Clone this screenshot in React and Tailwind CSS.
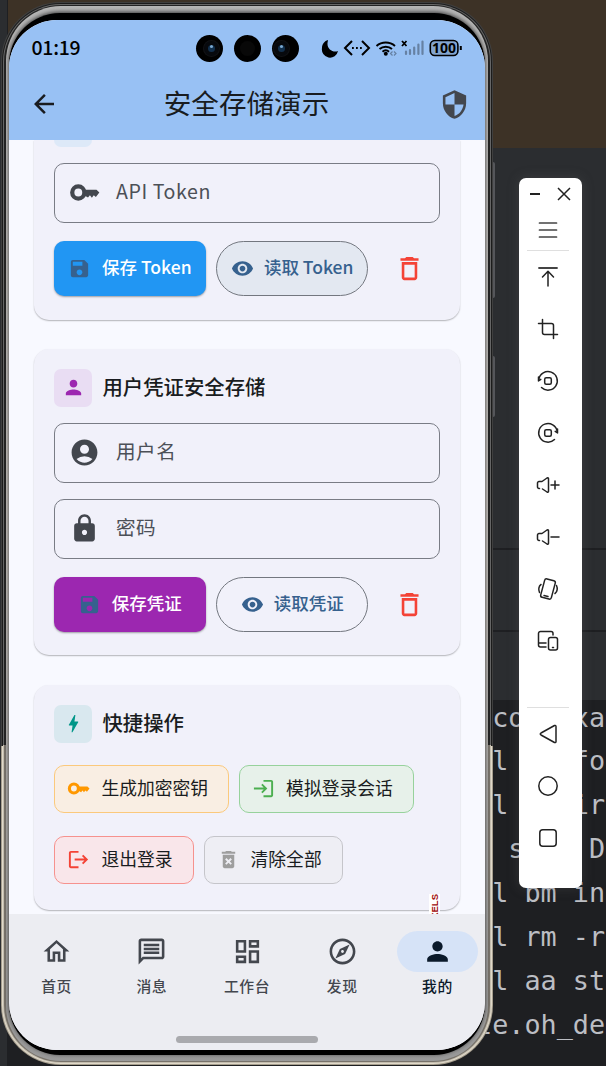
import React, { useState } from 'react';
import {
  MdArrowBack,
  MdSecurity,
  MdSave,
  MdVisibility,
  MdDeleteOutline,
  MdPerson,
  MdAccountCircle,
  MdLock,
  MdBolt,
  MdLogin,
  MdLogout,
  MdDeleteForever,
  MdOutlineHome,
  MdOutlineMessage,
  MdOutlineDashboard,
  MdOutlineExplore
} from 'react-icons/md';

const codeLines = [
  ' com.exam',
  ' l  info',
  ' l mkdir',
  '  send D',
  ' l bm ins',
  ' l rm -rf',
  ' l aa sta',
  'le.oh_dem'
];

const tabs = [
  { label: '首页', icon: MdOutlineHome },
  { label: '消息', icon: MdOutlineMessage },
  { label: '工作台', icon: MdOutlineDashboard },
  { label: '发现', icon: MdOutlineExplore },
  { label: '我的', icon: MdPerson }
];

const KeyIcon = ({ className }) => (
  <svg viewBox="0 0 24 24" fill="none" className={className}>
    <circle cx="7.200" cy="12" r="4.700" stroke="currentColor" strokeWidth="3.300" />
    <path d="M12 9.900h9.300l2.200 2.100-2.700 3.400-1.600-1.300-1.500 1.900-1.500-1.900-1.500 1.800-2.700-1.500Z" fill="currentColor" />
  </svg>
);

const Editor = () => (
  <div className="flex h-full bg-[#2b2d30]">
    <div className="w-[8px] shrink-0 border-r border-[#1e1f22]" />
    <div className="flex grow flex-col">
      <div className="h-[148px] bg-[#3d3226]" />
      <div className="h-[402px] border-b-2 border-[#1e1f22]" />
      <div className="h-[82px] border-b-2 border-[#1e1f22]" />
      <div className="h-[68px]" />
      <div className="grow bg-[#1e1f22] pl-[468px]">
        {codeLines.map((line) => (
          <pre key={line} className="h-[43.9px] pt-[1.500px] font-['DejaVu_Sans_Mono',monospace] text-[26.8px] leading-[32px] text-[#bcbec4]">{line}</pre>
        ))}
      </div>
    </div>
  </div>
);

const Camera = ({ lens, left }) => (
  <div className="flex size-[27px] items-center justify-center rounded-full bg-black">
    {lens ? (
      <div className={`flex size-[15px] items-center justify-center rounded-full bg-[#07090d] ring-1 ring-[#111215] ${left ? 'mr-2' : 'ml-1'}`}>
        <div className="flex size-[7px] items-start justify-center rounded-full bg-[#12304d]">
          <div className="size-[3px] rounded-full bg-[#7ba9d2]" />
        </div>
      </div>
    ) : (
      <div className="size-[15px] rounded-full bg-[#080808]" />
    )}
  </div>
);

const StatusBar = () => (
  <div className="flex h-[57px] items-center pb-px pl-[22.5px] text-black">
    <span className="w-[164.5px] pb-0.5 font-['Noto_Sans_CJK_SC',sans-serif] text-[19.5px] leading-none font-medium tracking-[-0.3px]">01:19</span>
    <div className="flex gap-[11px]">
      <Camera lens />
      <Camera />
      <Camera lens left />
    </div>
    <svg className="ml-[22px]" width="144" height="20" viewBox="0 0 144 20" fill="none">
      <path d="M7 2C3.500 3 1 6 1 10a8 8 0 0 0 16 3C12 15 6 11 6.500 5Z" fill="#000" />
      <path d="M31 3L24 10l7 7M41 3l7 7-7 7" stroke="#000" strokeWidth="2" />
      <path d="M31 10h1.800M35 10h1.800M39 10h1.800" stroke="#000" strokeWidth="2" />
      <path d="M55.500 8a14 14 0 0 1 18.500 0M58.500 11a9.500 9.500 0 0 1 12.500 0M61.500 13.700a5 5 0 0 1 6.500 0" stroke="#000" strokeWidth="2" />
      <circle cx="64.800" cy="15.800" r="2" fill="#000" />
      <path d="M71.500 13.500L69.500 15.500l2 2M73 13.500l2 2-2 2" stroke="#6681a3" strokeWidth="1.200" />
      <path d="M81 3l4.500 5M85.500 3L81 8" stroke="#000" strokeWidth="1.800" />
      <path d="M85 13.500v2.500M89 12v4M93.200 9.500v6.500M97.400 6.500v9.500M101.500 3.500v12.500" stroke="#6681a3" strokeWidth="2.200" strokeLinecap="round" />
      <rect x="109.300" y="2.500" width="27.600" height="15" rx="4.500" fill="#83a5cf" stroke="#000" strokeWidth="1.600" />
      <path d="M139.800 8v4" stroke="#000" strokeWidth="2" />
      <text x="123.100" y="15" textAnchor="middle" fontFamily="Noto Sans" fontSize="14" fontWeight="700" fill="#000">100</text>
    </svg>
  </div>
);

const Field = ({ icon: Icon, label }) => (
  <div className="flex h-[60px] items-center rounded-[10px] border border-[#797c85] pl-[13.5px]">
    <Icon className="size-[31px] text-[#43474e]" />
    <span className="ml-[16px] pb-[3px] text-[19.6px] leading-none tracking-[0.6px] text-[#4c5057]">{label}</span>
  </div>
);

const ActionRow = ({ color, saveText, readText, pressed, onRead }) => (
  <div className="mt-[18px] flex h-[55px] items-center text-[17.5px] leading-none font-medium">
    <button className={`flex h-full w-[152px] items-center justify-center gap-[11px] rounded-[10px] pr-px text-white shadow-[0_1px_2px_rgba(0,0,0,0.35)] ${color}`}>
      <MdSave className="size-[23px] text-[#36618e]" />
      <span className="pb-0.5">{saveText}</span>
    </button>
    <button
      onClick={onRead}
      className={`ml-2.5 flex h-full w-[152px] items-center justify-center gap-2.5 rounded-full border border-[#73777f] text-[#36618e] ${pressed ? 'bg-[#e3e8f1]' : ''}`}
    >
      <MdVisibility className="size-[23px]" />
      <span className="pb-0.5">{readText}</span>
    </button>
    <button className="ml-[10px] flex w-[62px] justify-center text-[#f44336]">
      <MdDeleteOutline className="size-[31px]" />
    </button>
  </div>
);

const CardTitle = ({ icon: Icon, tint, children }) => (
  <div className="flex items-center">
    <div className={`flex size-[38px] items-center justify-center rounded-[7px] ${tint}`}>
      <Icon className="size-[23px]" />
    </div>
    <h3 className="ml-[10px] pb-[3px] text-[20.4px] leading-none font-medium text-[#191c20]">{children}</h3>
  </div>
);

const Chip = ({ icon: Icon, tint, iconColor, children }) => (
  <button className={`flex h-12 items-center gap-[11px] rounded-[10px] border pr-5 pl-3 text-[17.8px] leading-none text-[#191c20] ${tint}`}>
    <Icon className={`size-[23px] ${iconColor}`} />
    <span className="pb-0.5">{children}</span>
  </button>
);

const Phone = () => {
  const [activeTab, setActiveTab] = useState('我的');
  const [tokenPressed, setTokenPressed] = useState(true);

  return (
    <div className="relative h-full rounded-[60px] bg-linear-to-b from-[#3f3f3f] from-70% to-[#a59d8d] to-70% p-[1px]">
      {/* Side buttons */}
      <div className="absolute top-[160px] right-[-2px] h-[136px] w-[2px] rounded-r bg-[#55565a]" />
      <div className="absolute top-[354px] right-[-2px] h-[61px] w-[2px] rounded-r bg-[#55565a]" />
      <div className="h-full rounded-[59px] bg-linear-to-b from-[#1c1c1c] from-70% to-[#e0d9ca] to-70% p-[1px]">
        <div className="h-full rounded-[58px] bg-linear-to-b from-[#666] from-70% to-[#c4bdae] to-70% p-[1px]">
          <div className="h-full rounded-[57px] bg-linear-to-b from-[#242424] from-70% to-[#77726a] to-70% px-[2px] pt-[1px] pb-[1px]">
            <div className="h-full rounded-[55px] bg-linear-to-b from-[#b5b5b5] via-[#c2beba] to-[#999] px-[3px] pt-[7px] pb-[6px]">
              <div className="h-full rounded-[51px] bg-black pt-[7px] pb-[5px] shadow-[0_-1px_4px_rgba(0,0,0,0.7)]">
                {/* Screen */}
                <div className="flex h-full flex-col overflow-hidden rounded-[48px] bg-[#f8f9ff] font-['Noto_Sans_CJK_SC',sans-serif]">
                  <div className="h-[119.5px] shrink-0 bg-[#98c1f4]">
                    <StatusBar />
                    <div className="flex h-[54px] items-center justify-between pr-[15px] pl-[20px]">
                      <MdArrowBack className="size-[30px] text-[#191c20]" />
                      <h1 className="pr-[5px] pb-[3px] text-[27.6px] leading-none text-[#191c20]">安全存储演示</h1>
                      <MdSecurity className="size-[31px] text-[#43474e]" />
                    </div>
                  </div>

                  {/* Scrolled content */}
                  <div className="relative flex h-[774.5px] shrink-0 flex-col overflow-hidden pr-[25px] pl-[25.4px]">
                    <section className="h-[180px] shrink-0 rounded-b-[15px] bg-[#f1f1fa] px-5 shadow-[0_1px_1.500px_rgba(0,0,0,0.28)]">
                      <div className="h-[7.5px] w-[38px] rounded-b-[7px] bg-[#dde9f8]" />
                      <div className="mt-[15.7px]">
                        <Field icon={KeyIcon} label="API Token" />
                      </div>
                      <ActionRow color="bg-[#2196f3]" saveText="保存 Token" readText="读取 Token" pressed={tokenPressed} onRead={() => setTokenPressed(!tokenPressed)} />
                    </section>

                    <section className="mt-[29.2px] h-[306px] shrink-0 rounded-[15px] bg-[#f1f1fa] px-5 pt-5 shadow-[0_1px_1.500px_rgba(0,0,0,0.28)]">
                      <CardTitle icon={MdPerson} tint="bg-[#e9ddf3] text-[#9c27b0]">用户凭证安全存储</CardTitle>
                      <div className="mt-4 flex flex-col gap-4">
                        <Field icon={MdAccountCircle} label="用户名" />
                        <Field icon={MdLock} label="密码" />
                      </div>
                      <ActionRow color="bg-[#9c27b0]" saveText="保存凭证" readText="读取凭证" />
                    </section>

                    <section className="mt-[30px] h-[225px] shrink-0 rounded-[15px] bg-[#f1f1fa] px-5 pt-5 shadow-[0_1px_1.500px_rgba(0,0,0,0.28)]">
                      <CardTitle icon={MdBolt} tint="bg-[#d9e8ef] text-[#009688]">快捷操作</CardTitle>
                      <div className="mt-[22px] flex flex-wrap gap-x-2.5 gap-y-[23px]">
                        <Chip icon={KeyIcon} tint="border-[#fbc97c] bg-[#f9eee3]" iconColor="text-[#ff9800]">生成加密密钥</Chip>
                        <Chip icon={MdLogin} tint="border-[#97d29c] bg-[#e7f1ea]" iconColor="text-[#4caf50]">模拟登录会话</Chip>
                        <Chip icon={MdLogout} tint="border-[#f6928e] bg-[#f9e6ea]" iconColor="text-[#f44336]">退出登录</Chip>
                        <Chip icon={MdDeleteForever} tint="border-[#c5c5ca] bg-[#eeeef4]" iconColor="text-[#9e9e9e]">清除全部</Chip>
                      </div>
                    </section>

                    {/* Overflow warning label */}
                    <div className="absolute right-[45px] bottom-0 flex h-[20px] w-[11px] items-start overflow-hidden bg-white">
                      <span className="rotate-180 font-['Liberation_Sans',sans-serif] text-[9.5px] leading-[11px] font-bold text-[#a00a0a] [writing-mode:vertical-rl]">PIXELS</span>
                    </div>
                  </div>

                  {/* Bottom navigation */}
                  <div className="flex grow flex-col bg-[#ecedf2]">
                    <div className="flex pt-[17px]">
                      {tabs.map(({ label, icon: Icon }) => (
                        <button
                          key={label}
                          onClick={() => setActiveTab(label)}
                          className={`flex flex-1 flex-col items-center ${activeTab === label ? 'text-[#0b1a2b]' : 'text-[#43474e]'}`}
                        >
                          <span className={`flex h-[41px] w-[81px] items-center justify-center rounded-full ${activeTab === label ? 'bg-[#d6e3f7]' : ''}`}>
                            <Icon className="size-[31px]" />
                          </span>
                          <span className="mt-[6.5px] text-[14.8px] leading-none font-medium tracking-[0.6px]">{label}</span>
                        </button>
                      ))}
                    </div>
                    <div className="mt-auto mb-[7px] h-[7px] w-[142px] self-center rounded-full bg-[#a9aaae]" />
                  </div>
                </div>
              </div>
            </div>
          </div>
        </div>
      </div>
    </div>
  );
};

const ToolIcon = ({ children }) => (
  <svg width="24" height="24" viewBox="0 0 24 24" fill="none" stroke="#222" strokeWidth="1.500" strokeLinecap="round" strokeLinejoin="round">
    {children}
  </svg>
);

const EmulatorToolbar = () => (
  <div className="flex h-full flex-col rounded-[7px] bg-white pr-[13px] pl-2 shadow-[0_0_12px_rgba(90,90,90,0.35)]">
    <div className="flex h-[31px] items-center justify-between pr-[2px] pl-[3px]">
      <svg width="10" height="14" viewBox="0 0 10 14" stroke="#222" strokeWidth="2">
        <path d="M0 7h10" />
      </svg>
      <svg width="14" height="14" viewBox="0 0 14 14" stroke="#222" strokeWidth="1.500" className="-mr-1">
        <path d="M1 1l12 12M13 1l-12 12" />
      </svg>
    </div>
    <div className="flex h-[42px] items-center justify-center border-b border-[#dfdfdf]">
      <ToolIcon><path d="M3.500 5h17M3.500 12h17M3.500 19h17" strokeWidth="1.700" stroke="#444" /></ToolIcon>
    </div>
    <div className="mt-[14px] flex flex-col items-center gap-[28px]">
      <ToolIcon><path d="M3 3h18" strokeWidth="1.800" stroke="#444" /><path d="M12 21V6.500M6.500 12L12 6.300l5.500 5.700" /></ToolIcon>
      <ToolIcon><path d="M6.500 2.500v13a2 2 0 0 0 2 2h13M2.500 6.500h13a2 2 0 0 1 2 2v13" /></ToolIcon>
      <ToolIcon>
        <path d="M5.500 18.500A9.300 9.300 0 1 0 2.800 10.500" />
        <path d="M2.500 8v4l2.300-1.600" />
        <rect x="8.700" y="8.700" width="6.600" height="6.600" rx="1.500" />
      </ToolIcon>
      <ToolIcon>
        <path d="M18.500 18.500A9.300 9.300 0 1 1 21.200 10.500" />
        <path d="M21.500 8v4l-2.300-1.600" />
        <rect x="8.700" y="8.700" width="6.600" height="6.600" rx="1.500" />
      </ToolIcon>
      <ToolIcon>
        <path d="M3.500 15.500H3a1.500 1.500 0 0 1-1.500-1.500v-4A1.500 1.500 0 0 1 3 8.500h3L11 5q1.500-.8 1.500.8V18.200q0 1.600-1.500.8L6.500 16" />
        <path d="M15 12h8M19 8v8" />
      </ToolIcon>
      <ToolIcon>
        <path d="M3.500 15.500H3a1.500 1.500 0 0 1-1.500-1.500v-4A1.500 1.500 0 0 1 3 8.500h3L11 5q1.500-.8 1.500.8V18.200q0 1.600-1.500.8L6.500 16" />
        <path d="M15 12h8" />
      </ToolIcon>
      <ToolIcon>
        <rect x="6.500" y="2.500" width="11" height="19" rx="2" transform="rotate(15 12 12)" />
        <path d="M8 18.500l4 1" />
        <path d="M5 7.500C2.500 9 2.300 13 3.500 15.500M19 16.500c2.500-1.500 2.700-5.500 1.500-8" />
      </ToolIcon>
      <ToolIcon>
        <path d="M17 6V4.500a2 2 0 0 0-2-2H4.500a2 2 0 0 0-2 2V16a2 2 0 0 0 2 2H10M2.500 14H10" />
        <rect x="12.500" y="8.500" width="9" height="12.500" rx="2" />
        <path d="M16.500 18.500h1" />
      </ToolIcon>
    </div>
    <div className="mt-[54px] flex flex-col items-center gap-[28px] border-t border-[#dfdfdf] pt-[14px]">
      <ToolIcon><path d="M18.500 3.500q1.500-.5 1.500 1V19.500q0 1.500-1.500 1L5 13q-1.500-1 0-2Z" /></ToolIcon>
      <ToolIcon><circle cx="12" cy="12" r="9.200" /></ToolIcon>
      <ToolIcon><rect x="3.800" y="3.800" width="16.400" height="16.400" rx="3" /></ToolIcon>
    </div>
  </div>
);

const App = () => {
  return (
    <div className="relative h-[1066px] w-[606px] overflow-hidden">
      <Editor />
      {/* Floating windows on the desktop */}
      <div className="absolute top-[2px] left-[1px] h-[1063px] w-[492px]">
        <Phone />
      </div>
      <div className="absolute top-[178px] left-[519px] h-[710px] w-[63px]">
        <EmulatorToolbar />
      </div>
    </div>
  );
};

export default App;
